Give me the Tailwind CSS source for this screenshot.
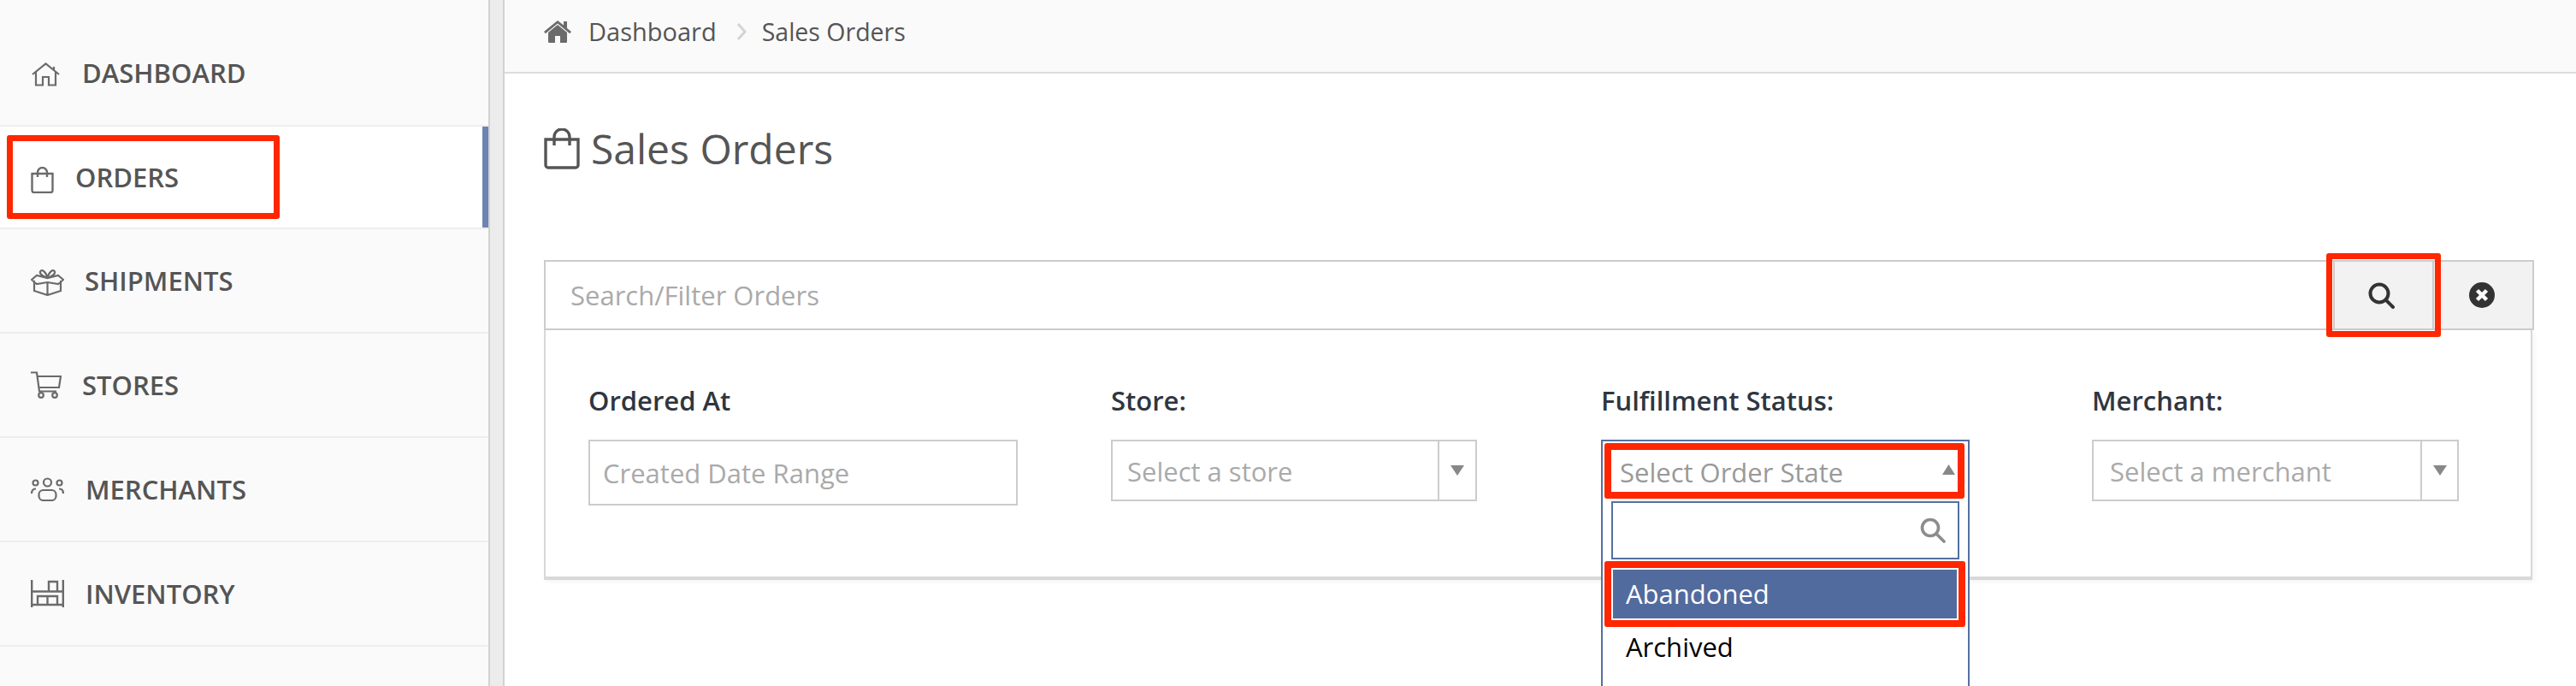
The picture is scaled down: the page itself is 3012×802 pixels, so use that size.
<!DOCTYPE html>
<html>
<head>
<meta charset="UTF-8">
<title>Sales Orders</title>
<script src="https://cdn.jsdelivr.net/npm/@tailwindcss/browser@4"></script>
</head>
<body class="h-[802px] w-[3012px] overflow-hidden bg-white font-['Open_Sans',sans-serif] text-[#555]">
<div class="flex h-full">

  <!-- sidebar -->
  <aside class="w-[571px] shrink-0 bg-[#fafafa] pt-[26px] text-[31px] leading-[44px] font-semibold">
    <a class="flex h-[122px] items-center border-b-2 border-[#eee] pb-[3px] pl-[37px]">
      <svg class="mr-[26px] w-[33px] h-[28px] mt-[4px]" viewBox="0 0 33 28" fill="none" stroke="#6b6b6b" stroke-width="2.2"><path d="M1 14 16.500 1.500 32 14M26 5v4M5 11v15.500h8V17h7v9.500h8V11"/></svg>
      <span>DASHBOARD</span>
    </a>
    <a class="relative flex h-[120px] items-center border-b-2 border-[#eee] bg-white pl-[36px]">
      <svg class="mr-[25px] w-[27px] h-[31px] mt-[6px]" viewBox="0 0 27 31" fill="none" stroke="#6b6b6b" stroke-width="2.4"><path d="M1.500 8h24v19.500a2.500 2.500 0 0 1-2.500 2.500H4a2.500 2.500 0 0 1-2.500-2.500zM8 12V6.500a5.500 5.500 0 0 1 11 0V12"/></svg>
      <span>ORDERS</span>
      <span class="absolute right-0 top-0 h-full w-[7px] bg-[#6c84b4]"></span>
    </a>
    <a class="flex h-[122px] items-center border-b-2 border-[#eee] pl-[36px]">
      <svg class="mr-[24px] w-[39px] h-[32px] mt-[4px]" viewBox="0 0 39 32" fill="none" stroke="#6b6b6b" stroke-width="2.2"><path d="M4 14v12l15.500 5 15.500-5V14M19.500 17v14M1 13l6-5 12.500 3 12.500-3 6 5-6 5-12.500-2-12.500 2zM19.500 11C15 9 10 7 11 3.500 13 0 18 4 19.500 11c1.500-7 6.500-11 8.500-7.500C29 7 24 9 19.500 11z"/></svg>
      <span>SHIPMENTS</span>
    </a>
    <a class="flex h-[122px] items-center border-b-2 border-[#eee] pl-[36px]">
      <svg class="mr-[24px] w-[36px] h-[32px]" viewBox="0 0 36 32" fill="none" stroke="#6b6b6b" stroke-width="2.2"><path d="M0 1.500h7l3 22h20M8 6h27l-2 13H9.500"/><circle cx="12" cy="28" r="2.800"/><circle cx="28" cy="28" r="2.800"/></svg>
      <span>STORES</span>
    </a>
    <a class="flex h-[122px] items-center border-b-2 border-[#eee] pl-[36px]">
      <svg class="mr-[25px] w-[39px] h-[28px]" viewBox="0 0 39 28" fill="none" stroke="#6b6b6b" stroke-width="2.200"><circle cx="19.500" cy="6" r="4.500"/><circle cx="5.500" cy="6.500" r="3"/><circle cx="33.500" cy="6.500" r="3"/><rect x="9.500" y="15" width="20" height="12" rx="5"/><path d="M1 19c0-4 2-5.500 5-5.500M38 19c0-4-2-5.500-5-5.500"/></svg>
      <span>MERCHANTS</span>
    </a>
    <a class="flex h-[122px] items-center border-b-2 border-[#eee] pl-[36px]">
      <svg class="mr-[25px] w-[39px] h-[32px]" viewBox="0 0 39 32" fill="none" stroke="#6b6b6b" stroke-width="2.400"><path d="M1.200 0v32M37.800 0v32M1 29h37M1 13.500h37M8 29V19h23v10M19.500 19v10M21 13V2h10v11"/></svg>
      <span>INVENTORY</span>
    </a>
  </aside>

  <!-- gutter -->
  <div class="h-full w-[19px] shrink-0 border-x-2 border-[#d2d2d2] bg-[#ececec]"></div>

  <main class="min-w-0 flex-1">
    <!-- breadcrumb -->
    <div class="flex h-[86px] items-center border-b-2 border-[#dcdcdc] bg-[#fafafa] pb-[10px] pl-[46px] text-[29px]">
      <svg class="mr-[20px] w-[32px] h-[26px]" viewBox="0 0 32 26" fill="#6b6b6b"><path d="M16 5 5 14v11a1 1 0 0 0 1 1h7v-8h6v8h7a1 1 0 0 0 1-1V14z"/><path d="M16 0 0 13l1.800 2.200L16 3.600l14.200 11.600L32 13l-5-4.100V1h-4v4.600z"/></svg>
      <span>Dashboard</span>
      <svg class="ml-[23px] mr-[18px] w-[12px] h-[22px]" viewBox="0 0 12 22" fill="none" stroke="#d4d4d4" stroke-width="3"><path d="m2 2 8 9-8 9"/></svg>
      <span class="text-[28.500px]">Sales Orders</span>
    </div>

    <div class="pl-[46px] pr-[49px]">
      <!-- page title -->
      <div class="flex h-[218px] items-start pt-[55px]">
        <svg class="mr-[13px] mt-[9px] w-[42px] h-[48px]" viewBox="0 0 42 48" fill="none" stroke="#555" stroke-width="3.400"><path d="M2 13h38v30a3 3 0 0 1-3 3H5a3 3 0 0 1-3-3zM12 20V10a9 9 0 0 1 18 0v10"/></svg>
        <h1 class="text-[48px] leading-[65px] font-normal">Sales Orders</h1>
      </div>

      <!-- search + filter panel -->
      <div class="relative w-[2327px]">
        <div class="flex h-[82px] border-2 border-[#ccc]">
          <div class="flex flex-1 items-center pl-[29px] text-[31px] text-[#aaa]">Search/Filter Orders</div>
          <button class="flex w-[118px] items-center justify-center border-x-2 border-[#ccc] bg-[#f2f2f2] pr-[6px]">
            <svg class="w-[31px] h-[31px]" viewBox="0 0 31 31" fill="none" stroke="#333" stroke-width="4"><circle cx="13" cy="13" r="10.500"/><path d="m20.500 20.500 8.500 8.500" stroke-linecap="round"/></svg>
          </button>
          <button class="flex w-[115px] items-center justify-center bg-[#f2f2f2] pr-[4px]">
            <svg class="w-[30px] h-[30px]" viewBox="0 0 30 30"><circle cx="15" cy="15" r="15" fill="#333"/><path d="m9.500 9.500 11 11M20.500 9.500l-11 11" stroke="#fff" stroke-width="4.500"/></svg>
          </button>
        </div>

        <div class="flex h-[292px] w-[2325px] border-x-2 border-b-4 border-[#d8d8d8] pl-[50px] pt-[66px] shadow-[2px_2px_6px_rgba(0,0,0,0.05)]">
          <div class="w-[611px] shrink-0">
            <label class="block text-[31px] leading-[32px] font-semibold text-[#2f3640]">Ordered At</label>
            <div class="mt-[30px] flex h-[77px] w-[502px] items-center border-2 border-[#ccc] pl-[15px] pt-[2px] text-[31px] text-[#aaa]">Created Date Range</div>
          </div>
          <div class="w-[573px] shrink-0">
            <label class="block text-[31px] leading-[32px] font-semibold text-[#2f3640]">Store:</label>
            <div class="mt-[30px] flex h-[72px] w-[428px] items-center border-2 border-[#ccc] text-[31px] text-[#aaa]">
              <span class="flex-1 pl-[17px] pt-[3px]">Select a store</span>
              <span class="flex h-full w-[44px] items-center justify-center border-l-2 border-[#ccc]">
                <svg class="w-[16px] h-[12px]" viewBox="0 0 16 12" fill="#888"><path d="M0 0h16L8 12z"/></svg>
              </span>
            </div>
          </div>
          <div class="relative w-[574px] shrink-0">
            <label class="block text-[31px] leading-[32px] font-semibold text-[#2f3640]">Fulfillment Status:</label>
            <!-- open dropdown -->
            <div class="absolute left-0 top-[62px] h-[300px] w-[431px] border-2 border-[#5470a0] bg-white">
              <div class="flex h-[70px] items-center pl-[20px] pr-[15px] text-[31px] text-[#999]">
                <span class="flex-1 pt-[2px]">Select Order State</span>
                <svg class="mb-[4px] w-[15px] h-[12px]" viewBox="0 0 15 12" fill="#888"><path d="M0 12h15L7.500 0z"/></svg>
              </div>
              <div class="mx-[10px] flex h-[68px] w-[407px] items-center justify-end border-2 border-[#5470a0] pr-[14px]">
                <svg class="w-[30px] h-[30px]" viewBox="0 0 30 30" fill="none" stroke="#8c8c8c" stroke-width="3.600"><circle cx="12" cy="12" r="9.500"/><path d="m19 19 9 9" stroke-linecap="round"/></svg>
              </div>
              <div class="mx-[12px] mt-[12px] flex h-[57px] w-[402px] items-center bg-[#526b9e] pl-[15px] text-[31px] text-white">Abandoned</div>
              <div class="mx-[12px] flex h-[66px] items-center pl-[15px] text-[31px] text-black">Archived</div>
            </div>
          </div>
          <div class="w-[429px] shrink-0">
            <label class="block text-[31px] leading-[32px] font-semibold text-[#2f3640]">Merchant:</label>
            <div class="mt-[30px] flex h-[72px] w-[429px] items-center border-2 border-[#ccc] text-[31px] text-[#aaa]">
              <span class="flex-1 pl-[19px] pt-[3px]">Select a merchant</span>
              <span class="flex h-full w-[43px] items-center justify-center border-l-2 border-[#ccc]">
                <svg class="w-[16px] h-[12px]" viewBox="0 0 16 12" fill="#888"><path d="M0 0h16L8 12z"/></svg>
              </span>
            </div>
          </div>
        </div>
      </div>
    </div>
  </main>
</div>

<!-- red annotation boxes drawn over the screenshot -->
<div class="absolute left-[8px] top-[158px] h-[98px] w-[319px] rounded-[3px] border-[7px] border-[#ff2600]"></div>
<div class="absolute left-[2720px] top-[296px] h-[98px] w-[134px] rounded-[3px] border-[7px] border-[#ff2600]"></div>
<div class="absolute left-[1876px] top-[518px] h-[65px] w-[421px] rounded-[3px] border-[8px] border-[#ff2600]"></div>
<div class="absolute left-[1876px] top-[656px] h-[77px] w-[422px] rounded-[3px] border-[8px] border-[#ff2600]"></div>
</body>
</html>
